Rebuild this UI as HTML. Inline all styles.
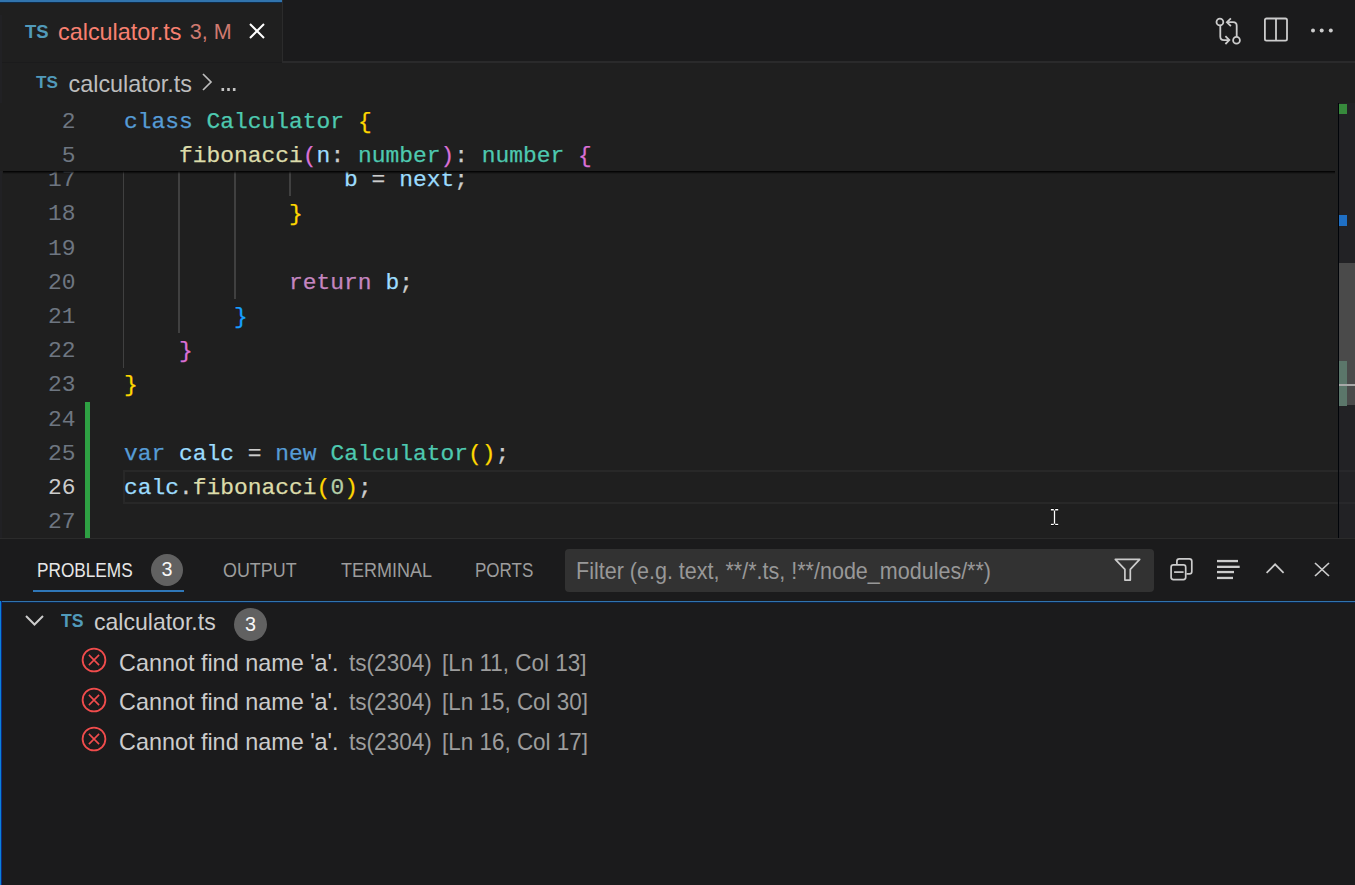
<!DOCTYPE html>
<html><head><meta charset="utf-8">
<style>
html,body{margin:0;padding:0;}
body{width:1355px;height:885px;overflow:hidden;background:#1f1f1f;position:relative;font-family:"Liberation Sans",sans-serif;}
.a{position:absolute;}
.t{position:absolute;white-space:pre;line-height:1;font-family:"Liberation Sans",sans-serif;}
.m{position:absolute;white-space:pre;line-height:1;font-family:"Liberation Mono",monospace;font-size:22.93px;color:#cccccc;-webkit-text-stroke:0.25px currentColor;}
.ln{position:absolute;white-space:pre;line-height:1;font-family:"Liberation Mono",monospace;font-size:22.93px;color:#6e7681;text-align:right;width:60px;left:15.5px;}
.kw{color:#569cd6}.cls{color:#4ec9b0}.fn{color:#dcdcaa}.var{color:#9cdcfe}.ctl{color:#c586c0}.num{color:#b5cea8}
.b1{color:#ffd700}.b2{color:#da70d6}.b3{color:#179fff}.p{color:#cccccc}
.guide{position:absolute;width:1.8px;background:#404040;}
svg{position:absolute;overflow:visible;}
</style></head><body>

<!-- TAB BAR -->
<div class="a" style="left:0;top:0;width:1355px;height:63px;background:#1b1b1c;"></div>
<div class="a" style="left:282px;top:61px;width:1073px;height:2px;background:#2a2a2b;"></div>
<div class="a" style="left:0;top:0;width:282px;height:62px;background:#1f1f1f;"></div>
<div class="a" style="left:0;top:0;width:282px;height:2px;background:#3174ad;"></div><div class="a" style="left:0;top:2px;width:282px;height:1px;background:#0d2a48;"></div>
<div class="a" style="left:282px;top:0;width:1px;height:62px;background:#2b2b2b;"></div>
<div class="t" style="left:25px;top:22.5px;font-size:18.5px;font-weight:bold;color:#519aba;">TS</div>
<div class="t" style="left:58px;top:21.1px;font-size:23.4px;color:#f88070;">calculator.ts</div>
<div class="t" style="left:189.8px;top:22.3px;font-size:21.5px;color:#cf7a70;">3, M</div>
<svg style="left:249px;top:22.5px" width="16" height="16"><path d="M1 1L15 15M15 1L1 15" stroke="#ffffff" stroke-width="2"/></svg>

<!-- tab actions -->
<svg style="left:1210px;top:12px" width="35" height="36" fill="none" stroke="#cccccc" stroke-width="1.8">
  <circle cx="9.9" cy="9.95" r="3.4"/>
  <circle cx="26.5" cy="28.3" r="3.4"/>
  <path d="M10.3 13.4V24.5q0 3.6 3.6 3.6H19.3"/>
  <path d="M15.4 24.2L19.3 28.1L15.4 32"/>
  <path d="M26.7 24.8V13.8q0-3.6-3.6-3.6H16.9"/>
  <path d="M20.9 6.3L16.9 10.2L20.9 14.1"/>
</svg>
<svg style="left:1264px;top:17px" width="24" height="25" fill="none" stroke="#cccccc" stroke-width="1.8">
  <rect x="0.9" y="1.5" width="22.1" height="22.1" rx="1.6"/>
  <path d="M12 1.5v22.1"/>
</svg>
<svg style="left:1310px;top:28px" width="24" height="6" fill="#cccccc">
  <circle cx="3" cy="2.5" r="2"/><circle cx="11.7" cy="2.5" r="2"/><circle cx="20.8" cy="2.5" r="2"/>
</svg>

<!-- BREADCRUMB -->
<div class="t" style="left:36px;top:74.3px;font-size:17.1px;font-weight:bold;color:#519aba;">TS</div>
<div class="t" style="left:68.5px;top:72.7px;font-size:23.4px;color:#bdbdbd;">calculator.ts</div>
<svg style="left:202px;top:72.5px" width="10" height="18"><path d="M1 1L9 9L1 17" fill="none" stroke="#bdbdbd" stroke-width="1.7"/></svg>
<svg style="left:221px;top:87px" width="16" height="5" fill="#c4c4c4"><rect x="0.5" y="1" width="2.6" height="3"/><rect x="6.2" y="1" width="2.6" height="3"/><rect x="11.9" y="1" width="2.6" height="3"/></svg>

<div class="a" style="left:0;top:15px;width:2px;height:523px;background:#212124;"></div>
<!-- EDITOR LINES -->
<div class="guide" style="left:122.6px;top:163px;height:205px;"></div>
<div class="guide" style="left:177.9px;top:163px;height:170px;"></div>
<div class="guide" style="left:234.3px;top:163px;height:136px;"></div>
<div class="guide" style="left:288.8px;top:163px;height:33px;"></div>

<!-- current line highlight -->
<div class="a" style="left:123px;top:470px;width:1232px;height:30px;border:2px solid #282828;border-right:none;"></div>
<!-- gutter added -->
<div class="a" style="left:85px;top:402px;width:5px;height:136px;background:#2ea043;"></div>

<div class="ln" style="top:169.2px;">17</div>
<div class="m" style="left:124px;top:169.2px;">                <span class="var">b</span> = <span class="var">next</span>;</div>
<div class="ln" style="top:203.4px;">18</div>
<div class="m" style="left:124px;top:203.4px;">            <span class="b1">}</span></div>
<div class="ln" style="top:237.6px;">19</div>
<div class="ln" style="top:271.8px;">20</div>
<div class="m" style="left:124px;top:271.8px;">            <span class="ctl">return</span> <span class="var">b</span>;</div>
<div class="ln" style="top:306px;">21</div>
<div class="m" style="left:124px;top:306px;">        <span class="b3">}</span></div>
<div class="ln" style="top:340.2px;">22</div>
<div class="m" style="left:124px;top:340.2px;">    <span class="b2">}</span></div>
<div class="ln" style="top:374.4px;">23</div>
<div class="m" style="left:124px;top:374.4px;"><span class="b1">}</span></div>
<div class="ln" style="top:408.6px;">24</div>
<div class="ln" style="top:442.8px;">25</div>
<div class="m" style="left:124px;top:442.8px;"><span class="kw">var</span> <span class="var">calc</span> = <span class="kw">new</span> <span class="cls">Calculator</span><span class="b1">()</span>;</div>
<div class="ln" style="top:477px;color:#cccccc;">26</div>
<div class="m" style="left:124px;top:477px;"><span class="var">calc</span>.<span class="fn">fibonacci</span><span class="b1">(</span><span class="num">0</span><span class="b1">)</span>;</div>
<div class="ln" style="top:511.2px;">27</div>

<!-- STICKY SCROLL -->
<div class="a" style="left:0;top:103px;width:1338px;height:68px;background:#1f1f1f;"></div>
<div class="a" style="left:3px;top:171px;width:1332px;height:3px;background:linear-gradient(#000000 0%,rgba(0,0,0,0.6) 40%,rgba(0,0,0,0) 100%);"></div>
<div class="ln" style="top:110.7px;">2</div>
<div class="m" style="left:124px;top:110.7px;"><span class="kw">class</span> <span class="cls">Calculator</span> <span class="b1">{</span></div>
<div class="ln" style="top:145px;">5</div>
<div class="m" style="left:124px;top:145px;">    <span class="fn">fibonacci</span><span class="b2">(</span><span class="var">n</span>: <span class="cls">number</span><span class="b2">)</span>: <span class="cls">number</span> <span class="b2">{</span></div>

<!-- OVERVIEW RULER / SCROLLBAR -->
<div class="a" style="left:1339px;top:103px;width:16px;height:435px;background:rgba(40,40,48,0.35);"></div>
<div class="a" style="left:1338px;top:103px;width:1px;height:435px;background:#010409;"></div>
<div class="a" style="left:1339px;top:263px;width:16px;height:142px;background:#4a4a4a;"></div>
<div class="a" style="left:1339px;top:104px;width:8px;height:10px;background:#378a3c;"></div>
<div class="a" style="left:1339px;top:215px;width:8px;height:11px;background:#1f6fc4;"></div>
<div class="a" style="left:1339px;top:361px;width:8px;height:45px;background:#5b766a;"></div>
<div class="a" style="left:1339px;top:383.5px;width:16px;height:2.2px;background:#a8a8a8;"></div>

<!-- mouse I-beam -->
<svg style="left:1050px;top:508px" width="10" height="18">
  <path d="M0.9 1.8H3.8M5.2 1.8H8.2M0.9 16.4H3.8M5.2 16.4H8.2M4.5 2.4V15.8" stroke="#000" stroke-width="2.8" fill="none" stroke-opacity="0.8"/>
  <path d="M0.9 1.8H3.8M5.2 1.8H8.2M0.9 16.4H3.8M5.2 16.4H8.2M4.5 2.4V15.8" stroke="#fff" stroke-width="1.4" fill="none"/>
</svg>

<!-- PANEL -->
<div class="a" style="left:0;top:538px;width:1355px;height:347px;background:#1b1b1c;"></div>
<div class="a" style="left:0;top:538px;width:1355px;height:1px;background:#2b2b2b;"></div>

<div class="t" style="left:37px;top:561.1px;font-size:19.8px;color:#e7e7e7;transform-origin:0 0;transform:scaleX(0.87);">PROBLEMS</div>
<div class="a" style="left:151px;top:554px;width:32px;height:32px;border-radius:50%;background:#616161;"></div>
<div class="t" style="left:151px;top:560px;width:32px;text-align:center;font-size:19.8px;color:#f8f8f8;">3</div>
<div class="a" style="left:33px;top:589.5px;width:151px;height:2px;background:#2f77b8;"></div>
<div class="t" style="left:222.7px;top:561px;font-size:19.8px;color:#9d9d9d;transform-origin:0 0;transform:scaleX(0.905);">OUTPUT</div>
<div class="t" style="left:341px;top:561px;font-size:19.8px;color:#9d9d9d;transform-origin:0 0;transform:scaleX(0.91);">TERMINAL</div>
<div class="t" style="left:475px;top:561px;font-size:19.8px;color:#9d9d9d;transform-origin:0 0;transform:scaleX(0.86);">PORTS</div>

<!-- filter input -->
<div class="a" style="left:564.5px;top:548.5px;width:589px;height:43.5px;background:#323232;border-radius:4px;"></div>
<div class="t" style="left:576px;top:560.4px;font-size:23.4px;color:#989898;transform-origin:0 0;transform:scaleX(0.92);">Filter (e.g. text, **/*.ts, !**/node_modules/**)</div>
<svg style="left:1105px;top:550px" width="45" height="40" fill="none" stroke="#cccccc" stroke-width="1.7" stroke-linejoin="round">
  <path d="M10.3 9.4H34.7L25.3 19.4V30.1H19.9V19.4Z"/>
</svg>

<!-- panel actions -->
<svg style="left:1165px;top:552px" width="35" height="35" fill="none" stroke="#cccccc" stroke-width="1.7">
  <path d="M11.9 12V9.3q0-2.4 2.4-2.4H24.4q2.4 0 2.4 2.4V19.5q0 2.4-2.4 2.4H21.4"/>
  <rect x="6.1" y="12.9" width="14.6" height="14.7" rx="2.3"/>
  <path d="M9.1 20.1H18.6"/>
</svg>
<svg style="left:1210px;top:552px" width="35" height="35" fill="#cccccc">
  <rect x="7" y="7.9" width="21" height="2.3"/>
  <rect x="7" y="13.7" width="22.7" height="2.3"/>
  <rect x="7" y="18.9" width="17" height="2.3"/>
  <rect x="7" y="24.8" width="16" height="2.3"/>
</svg>
<svg style="left:1258px;top:552px" width="35" height="35"><path d="M8.6 20.9L17.1 12.3L25.6 20.9" fill="none" stroke="#cccccc" stroke-width="1.7"/></svg>
<svg style="left:1314px;top:562px" width="16" height="15"><path d="M1 1L15 14M15 1L1 14" fill="none" stroke="#cccccc" stroke-width="1.7"/></svg>

<!-- focus border -->
<div class="a" style="left:0;top:601px;width:1355px;height:1px;background:#3174ad;"></div><div class="a" style="left:0;top:602px;width:1355px;height:1px;background:#0b2346;"></div>
<div class="a" style="left:0;top:601px;width:1px;height:284px;background:#0a82da;"></div><div class="a" style="left:1px;top:601px;width:1px;height:284px;background:#0c2a80;"></div>

<!-- problems tree -->
<svg style="left:25px;top:615px" width="19" height="11"><path d="M1 1L9.5 9.5L18 1" fill="none" stroke="#cccccc" stroke-width="2"/></svg>
<div class="t" style="left:60.5px;top:610.9px;font-size:19.2px;font-weight:bold;color:#519aba;transform-origin:0 0;transform:scaleX(0.92);">TS</div>
<div class="t" style="left:94px;top:611.2px;font-size:23.4px;color:#cccccc;transform-origin:0 0;transform:scaleX(0.985);">calculator.ts</div>
<div class="a" style="left:234px;top:608px;width:33px;height:33px;border-radius:50%;background:#616161;"></div>
<div class="t" style="left:234px;top:615px;width:33px;text-align:center;font-size:19.8px;color:#f8f8f8;">3</div>

<svg style="left:81px;top:647px" width="26" height="26" fill="none" stroke="#f14c4c" stroke-width="1.8"><circle cx="13" cy="13" r="11.4"/><path d="M7.9 7.9l10.2 10.2M18.1 7.9l-10.2 10.2" stroke-width="1.6"/></svg>
<div class="t" style="left:119px;top:651.6px;font-size:23.4px;color:#cccccc;">Cannot find name 'a'.</div>
<div class="t" style="left:349px;top:651.6px;font-size:23.4px;color:#9d9d9d;transform-origin:0 0;transform:scaleX(0.965);">ts(2304)</div>
<div class="t" style="left:442px;top:651.6px;font-size:23.4px;color:#9d9d9d;transform-origin:0 0;transform:scaleX(0.96);">[Ln 11, Col 13]</div>

<svg style="left:81px;top:686.6px" width="26" height="26" fill="none" stroke="#f14c4c" stroke-width="1.8"><circle cx="13" cy="13" r="11.4"/><path d="M7.9 7.9l10.2 10.2M18.1 7.9l-10.2 10.2" stroke-width="1.6"/></svg>
<div class="t" style="left:119px;top:691.2px;font-size:23.4px;color:#cccccc;">Cannot find name 'a'.</div>
<div class="t" style="left:349px;top:691.2px;font-size:23.4px;color:#9d9d9d;transform-origin:0 0;transform:scaleX(0.965);">ts(2304)</div>
<div class="t" style="left:442px;top:691.2px;font-size:23.4px;color:#9d9d9d;transform-origin:0 0;transform:scaleX(0.96);">[Ln 15, Col 30]</div>

<svg style="left:81px;top:726.2px" width="26" height="26" fill="none" stroke="#f14c4c" stroke-width="1.8"><circle cx="13" cy="13" r="11.4"/><path d="M7.9 7.9l10.2 10.2M18.1 7.9l-10.2 10.2" stroke-width="1.6"/></svg>
<div class="t" style="left:119px;top:730.8px;font-size:23.4px;color:#cccccc;">Cannot find name 'a'.</div>
<div class="t" style="left:349px;top:730.8px;font-size:23.4px;color:#9d9d9d;transform-origin:0 0;transform:scaleX(0.965);">ts(2304)</div>
<div class="t" style="left:442px;top:730.8px;font-size:23.4px;color:#9d9d9d;transform-origin:0 0;transform:scaleX(0.96);">[Ln 16, Col 17]</div>

</body></html>
